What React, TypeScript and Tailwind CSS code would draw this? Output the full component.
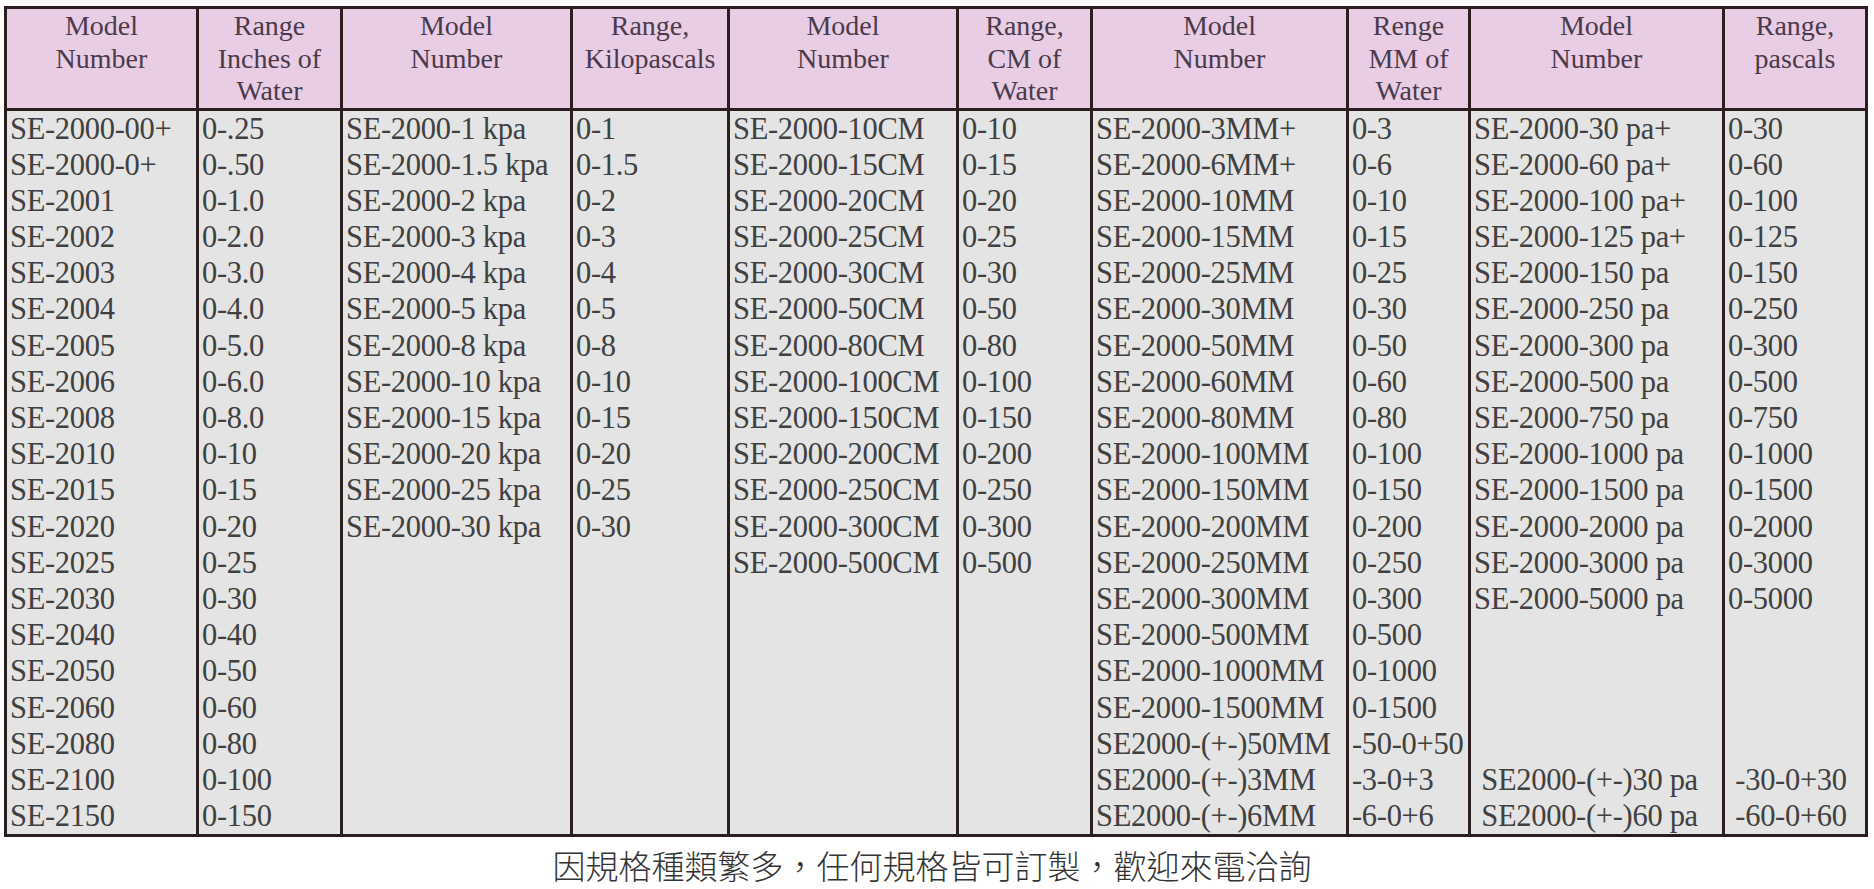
import React from "react";

type Col = { h: string[]; w: string; items: string[] };

const cols: Col[] = [
  {
    h: ["Model", "Number"],
    w: "w-[192px]",
    items: [
      "SE-2000-00+", "SE-2000-0+", "SE-2001", "SE-2002", "SE-2003", "SE-2004", "SE-2005", "SE-2006", "SE-2008", "SE-2010",
      "SE-2015", "SE-2020", "SE-2025", "SE-2030", "SE-2040", "SE-2050", "SE-2060", "SE-2080", "SE-2100", "SE-2150",
    ],
  },
  {
    h: ["Range", "Inches of", "Water"],
    w: "w-[144px]",
    items: [
      "0-.25", "0-.50", "0-1.0", "0-2.0", "0-3.0", "0-4.0", "0-5.0", "0-6.0", "0-8.0", "0-10",
      "0-15", "0-20", "0-25", "0-30", "0-40", "0-50", "0-60", "0-80", "0-100", "0-150",
    ],
  },
  {
    h: ["Model", "Number"],
    w: "w-[230px]",
    items: [
      "SE-2000-1 kpa", "SE-2000-1.5 kpa", "SE-2000-2 kpa", "SE-2000-3 kpa", "SE-2000-4 kpa", "SE-2000-5 kpa",
      "SE-2000-8 kpa", "SE-2000-10 kpa", "SE-2000-15 kpa", "SE-2000-20 kpa", "SE-2000-25 kpa", "SE-2000-30 kpa",
    ],
  },
  {
    h: ["Range,", "Kilopascals"],
    w: "w-[157px]",
    items: ["0-1", "0-1.5", "0-2", "0-3", "0-4", "0-5", "0-8", "0-10", "0-15", "0-20", "0-25", "0-30"],
  },
  {
    h: ["Model", "Number"],
    w: "w-[229px]",
    items: [
      "SE-2000-10CM", "SE-2000-15CM", "SE-2000-20CM", "SE-2000-25CM", "SE-2000-30CM", "SE-2000-50CM", "SE-2000-80CM",
      "SE-2000-100CM", "SE-2000-150CM", "SE-2000-200CM", "SE-2000-250CM", "SE-2000-300CM", "SE-2000-500CM",
    ],
  },
  {
    h: ["Range,", "CM of", "Water"],
    w: "w-[134px]",
    items: ["0-10", "0-15", "0-20", "0-25", "0-30", "0-50", "0-80", "0-100", "0-150", "0-200", "0-250", "0-300", "0-500"],
  },
  {
    h: ["Model", "Number"],
    w: "w-[256px]",
    items: [
      "SE-2000-3MM+", "SE-2000-6MM+", "SE-2000-10MM", "SE-2000-15MM", "SE-2000-25MM", "SE-2000-30MM", "SE-2000-50MM",
      "SE-2000-60MM", "SE-2000-80MM", "SE-2000-100MM", "SE-2000-150MM", "SE-2000-200MM", "SE-2000-250MM",
      "SE-2000-300MM", "SE-2000-500MM", "SE-2000-1000MM", "SE-2000-1500MM", "SE2000-(+-)50MM", "SE2000-(+-)3MM",
      "SE2000-(+-)6MM",
    ],
  },
  {
    h: ["Renge", "MM of", "Water"],
    w: "w-[122px]",
    items: [
      "0-3", "0-6", "0-10", "0-15", "0-25", "0-30", "0-50", "0-60", "0-80", "0-100", "0-150", "0-200", "0-250", "0-300",
      "0-500", "0-1000", "0-1500", "-50-0+50", "-3-0+3", "-6-0+6",
    ],
  },
  {
    h: ["Model", "Number"],
    w: "w-[254px]",
    items: [
      "SE-2000-30 pa+", "SE-2000-60 pa+", "SE-2000-100 pa+", "SE-2000-125 pa+", "SE-2000-150 pa", "SE-2000-250 pa",
      "SE-2000-300 pa", "SE-2000-500 pa", "SE-2000-750 pa", "SE-2000-1000 pa", "SE-2000-1500 pa", "SE-2000-2000 pa",
      "SE-2000-3000 pa", "SE-2000-5000 pa", "", "", "", "", " SE2000-(+-)30 pa", " SE2000-(+-)60 pa",
    ],
  },
  {
    h: ["Range,", "pascals"],
    w: "w-[143px]",
    items: [
      "0-30", "0-60", "0-100", "0-125", "0-150", "0-250", "0-300", "0-500", "0-750", "0-1000", "0-1500", "0-2000",
      "0-3000", "0-5000", "", "", "", "", " -30-0+30", " -60-0+60",
    ],
  },
];

export default function App() {
  return (
    <div className="min-h-[889px] w-full bg-white pl-[4px] pt-[6px]">
      <table
        className="table-fixed border-collapse border-[3px] border-[#2a1e1f]"
        style={{ fontFamily: '"Liberation Serif", "Noto Sans CJK TC", serif' }}
      >
        <colgroup>
          {cols.map((c, i) => (
            <col key={i} className={c.w} />
          ))}
        </colgroup>
        <thead>
          <tr className="h-[99px] bg-[#e8cde5]">
            {cols.map((c, i) => (
              <th
                key={i}
                className="border-[3px] border-[#2a1e1f] pt-[1px] align-top text-[28px] font-normal leading-[32.5px] text-[#4a3a4a]"
              >
                {c.h.map((l, j) => (
                  <div key={j} className="whitespace-nowrap">
                    {l}
                  </div>
                ))}
              </th>
            ))}
          </tr>
        </thead>
        <tbody>
          <tr className="bg-[#e4e4e4]">
            {cols.map((c, i) => (
              <td
                key={i}
                className="border-x-[3px] border-[#2a1e1f] px-[3px] py-0 align-top text-[30.5px] leading-[36.2px] tracking-[-0.3px] text-[#404040]"
              >
                {Array.from({ length: 20 }).map((_, j) => (
                  <div key={j} className="h-[36.2px] whitespace-pre">
                    {c.items[j] ?? ""}
                  </div>
                ))}
              </td>
            ))}
          </tr>
        </tbody>
      </table>
      <div
        className="pt-[6px] pr-[14px] text-center text-[33px] font-light leading-[44px] text-[#333333]"
        style={{ fontFamily: '"Noto Sans CJK TC", sans-serif' }}
      >
        因規格種類繁多，任何規格皆可訂製，歡迎來電洽詢
      </div>
    </div>
  );
}
